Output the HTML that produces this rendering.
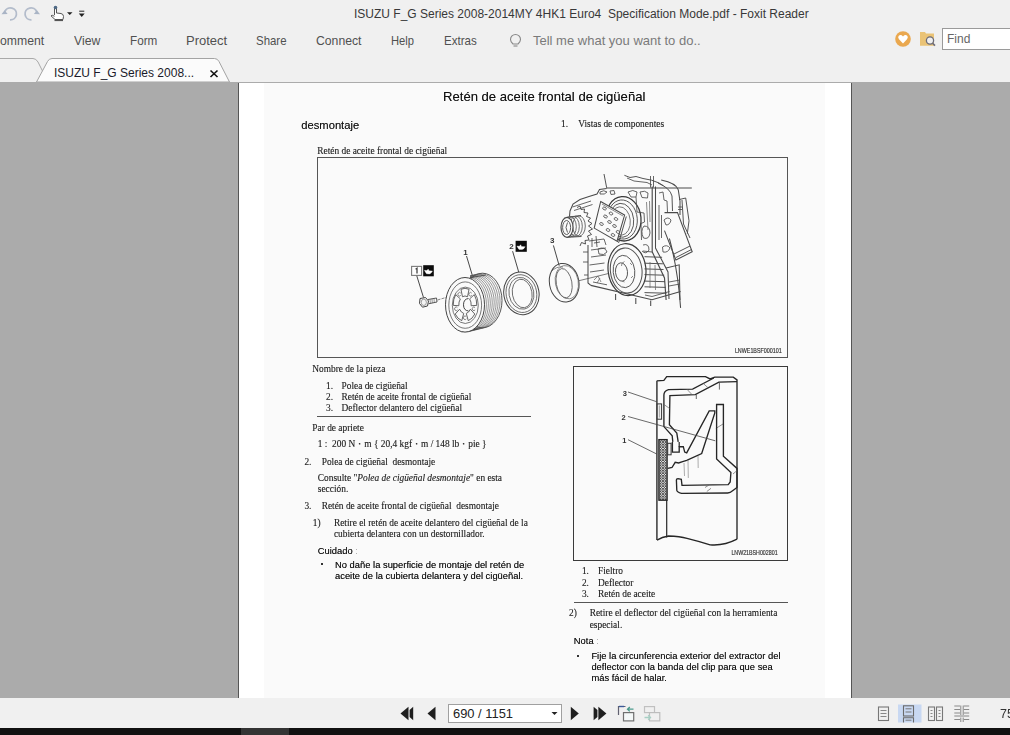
<!DOCTYPE html>
<html><head><meta charset="utf-8">
<style>
*{margin:0;padding:0;box-sizing:border-box}
html,body{width:1010px;height:735px;overflow:hidden;background:#f0f0f0;font-family:"Liberation Sans",sans-serif}
.a{position:absolute;white-space:pre}
#top{position:absolute;left:0;top:0;width:1010px;height:82px;background:#f0f0f0}
#view{position:absolute;left:0;top:82px;width:1010px;height:616px;background:#ababab}
#page{position:absolute;left:238px;top:83px;width:614px;height:615px;background:#fff;border-left:1px solid #555;border-right:1px solid #555;overflow:hidden}
#scan{position:absolute;left:25px;top:0;width:561px;height:615px;background:#fafafa}
#status{position:absolute;left:0;top:698px;width:1010px;height:30px;background:#f0f0f0}
#black{position:absolute;left:0;top:728px;width:1010px;height:7px;background:#111}
.menu{font-size:13px;color:#505050;top:33px}
svg{position:absolute;overflow:visible}
#content{position:absolute;left:0;top:0;width:1010px;height:735px;will-change:transform}
</style></head><body>
<div id="top">
  <div class="a" style="left:354px;top:7px;font-size:12px;color:#383838">ISUZU F_G Series 2008-2014MY 4HK1 Euro4  Specification Mode.pdf - Foxit Reader</div>
  <!-- quick access icons -->
  <svg style="left:0;top:0" width="90" height="28">
    <path d="M4.8 11.8 A6 6 0 1 1 10 19.8" fill="none" stroke="#b3bccb" stroke-width="1.8"/>
    <path d="M1.5 14.3 L4.6 10.2 L7.6 14 Z" fill="#a9b4c5"/>
    <path d="M36.7 11.8 A6 6 0 1 0 31.5 19.8" fill="none" stroke="#b3bccb" stroke-width="1.8"/>
    <path d="M40 14.3 L36.9 10.2 L33.9 14 Z" fill="#a9b4c5"/>
    <path d="M54.5 15 L54.5 8 Q55.5 6.2 56.5 8 L56.5 13 L61 13.5 Q63.5 14 63.5 16.5 L63 19.5 L55 19.5 L51 15.8 Q52 14.6 54.5 16.3" fill="#fff" stroke="#555" stroke-width="1"/>
    <circle cx="55.5" cy="7.5" r="1.8" fill="#4f6a86"/>
    <path d="M54.5 20.5 H63" stroke="#555" stroke-width="1.2"/>
    <path d="M67 12.3 H72.5 L69.75 15 Z" fill="#222"/>
    <path d="M79.2 11.2 H84.3" stroke="#222" stroke-width="1"/>
    <path d="M78.8 13.6 H84.7 L81.75 16.9 Z" fill="#222"/>
  </svg>
  <div class="a menu" style="left:0px;font-size:13px;transform:scaleX(0.94);transform-origin:0 0">omment</div>
  <div class="a menu" style="left:74px;font-size:13px;transform:scaleX(0.94);transform-origin:0 0">View</div>
  <div class="a menu" style="left:130px;font-size:13px;transform:scaleX(0.9);transform-origin:0 0">Form</div>
  <div class="a menu" style="left:186px;font-size:13px;transform:scaleX(1.0);transform-origin:0 0">Protect</div>
  <div class="a menu" style="left:256px;font-size:13px;transform:scaleX(0.88);transform-origin:0 0">Share</div>
  <div class="a menu" style="left:316px;font-size:13px;transform:scaleX(0.94);transform-origin:0 0">Connect</div>
  <div class="a menu" style="left:391px;font-size:13px;transform:scaleX(0.86);transform-origin:0 0">Help</div>
  <div class="a menu" style="left:444px;font-size:13px;transform:scaleX(0.89);transform-origin:0 0">Extras</div>
  <svg style="left:509px;top:33px" width="16" height="16">
    <path d="M4 11 Q1.5 8.5 1.5 6.5 A5 5 0 0 1 11.5 6.5 Q11.5 8.5 9 11 Z" fill="none" stroke="#888" stroke-width="1.1"/>
    <path d="M4.5 13 H8.5" stroke="#888" stroke-width="1.1"/>
  </svg>
  <div class="a menu" style="left:533px;font-size:13px;color:#7a7a7a;top:32.5px">Tell me what you want to do..</div>
  <!-- heart & folder -->
  <svg style="left:890px;top:26px" width="50" height="26">
    <circle cx="13" cy="13" r="7.8" fill="#eaa84f"/>
    <path d="M13 17.5 L9 13.3 Q7.6 11.5 8.6 10 Q10.6 8 13 10.4 Q15.4 8 17.4 10 Q18.4 11.5 17 13.3 Z" fill="#fff"/>
    <path d="M30 6 H35 L36 7.5 H44 V19.8 H30 Z" fill="#eac376"/>
    <circle cx="40" cy="14.5" r="3.6" fill="#f0f0f0" stroke="#6c6c7a" stroke-width="1.3"/>
    <path d="M42.6 17.2 L45 19.6" stroke="#6c6c7a" stroke-width="1.6"/>
  </svg>
  <div style="position:absolute;left:942px;top:28px;width:80px;height:22px;background:#fff;border:1px solid #9a9a9a"></div>
  <div class="a" style="left:947px;top:31.5px;font-size:12px;color:#666">Find</div>
  <!-- tabs -->
  <svg style="left:0;top:0" width="260" height="83">
    <path d="M0 58.5 H33 Q36 58.5 38 62 L44 74" fill="none" stroke="#a9a9a9" stroke-width="1"/>
    <path d="M36.5 82 L47.5 61.5 Q49 58.5 52 58.5 H214.5 Q217.5 58.5 219 61.5 L229.5 82 Z" fill="#fbfbfb" stroke="#a3a3a3" stroke-width="1"/>
    <path d="M210.5 70.5 L217.5 77 M217.5 70.5 L210.5 77" stroke="#111" stroke-width="1.6"/>
  </svg>
  <div class="a" style="left:54px;top:66px;font-size:12px;color:#1a1a2a">ISUZU F_G Series 2008...</div>
</div>
<div id="view"></div>
<div id="page"><div id="scan"></div></div>
<div id="content">
<!--TEXT-->
<div class="a" style="left:443.0px;top:90.31px;font:13.1px/1 'Liberation Sans',sans-serif;color:#111;text-shadow:0 0 0.3px rgba(0,0,0,0.5)">Retén de aceite frontal de cigüeñal</div>
<div class="a" style="left:301.3px;top:119.52px;font:11.2px/1 'Liberation Sans',sans-serif;color:#111;text-shadow:0 0 0.3px rgba(0,0,0,0.5)">desmontaje</div>
<div class="a" style="left:317.8px;top:545.54px;font:9.4px/1 'Liberation Sans',sans-serif;color:#111;text-shadow:0 0 0.4px rgba(0,0,0,0.6)">Cuidado <span style="color:#aaa;text-shadow:none">:</span></div>
<div class="a" style="left:335.0px;top:559.64px;font:9.4px/1 'Liberation Sans',sans-serif;color:#111;text-shadow:0 0 0.4px rgba(0,0,0,0.6)">No dañe la superficie de montaje del retén de</div>
<div class="a" style="left:335.0px;top:570.74px;font:9.4px/1 'Liberation Sans',sans-serif;color:#111;text-shadow:0 0 0.4px rgba(0,0,0,0.6)">aceite de la cubierta delantera y del cigüeñal.</div>
<div class="a" style="left:573.8px;top:636.04px;font:9.4px/1 'Liberation Sans',sans-serif;color:#111;text-shadow:0 0 0.4px rgba(0,0,0,0.6)">Nota <span style="color:#aaa;text-shadow:none">:</span></div>
<div class="a" style="left:591.4px;top:650.84px;font:9.4px/1 'Liberation Sans',sans-serif;color:#111;text-shadow:0 0 0.4px rgba(0,0,0,0.6)">Fije la circunferencia exterior del extractor del</div>
<div class="a" style="left:591.4px;top:661.84px;font:9.4px/1 'Liberation Sans',sans-serif;color:#111;text-shadow:0 0 0.4px rgba(0,0,0,0.6)">deflector con la banda del clip para que sea</div>
<div class="a" style="left:591.4px;top:673.04px;font:9.4px/1 'Liberation Sans',sans-serif;color:#111;text-shadow:0 0 0.4px rgba(0,0,0,0.6)">más fácil de halar.</div>
<div class="a" style="left:561.0px;top:120.13px;font:9.4px/1 'Liberation Serif',serif;color:#202020;-webkit-text-stroke:0.12px #202020">1.</div>
<div class="a" style="left:578.2px;top:120.13px;font:9.4px/1 'Liberation Serif',serif;color:#202020;-webkit-text-stroke:0.12px #202020">Vistas de componentes</div>
<div class="a" style="left:317.3px;top:147.43px;font:9.4px/1 'Liberation Serif',serif;color:#202020;-webkit-text-stroke:0.12px #202020">Retén de aceite frontal de cigüeñal</div>
<div class="a" style="left:312.3px;top:365.13px;font:9.4px/1 'Liberation Serif',serif;color:#202020;-webkit-text-stroke:0.12px #202020">Nombre de la pieza</div>
<div class="a" style="left:326.0px;top:381.53px;font:9.4px/1 'Liberation Serif',serif;color:#202020;-webkit-text-stroke:0.12px #202020">1.</div>
<div class="a" style="left:341.5px;top:381.53px;font:9.4px/1 'Liberation Serif',serif;color:#202020;-webkit-text-stroke:0.12px #202020">Polea de cigüeñal</div>
<div class="a" style="left:326.0px;top:392.73px;font:9.4px/1 'Liberation Serif',serif;color:#202020;-webkit-text-stroke:0.12px #202020">2.</div>
<div class="a" style="left:341.5px;top:392.73px;font:9.4px/1 'Liberation Serif',serif;color:#202020;-webkit-text-stroke:0.12px #202020">Retén de aceite frontal de cigüeñal</div>
<div class="a" style="left:326.0px;top:403.83px;font:9.4px/1 'Liberation Serif',serif;color:#202020;-webkit-text-stroke:0.12px #202020">3.</div>
<div class="a" style="left:341.5px;top:403.83px;font:9.4px/1 'Liberation Serif',serif;color:#202020;-webkit-text-stroke:0.12px #202020">Deflector delantero del cigüeñal</div>
<div class="a" style="left:312.3px;top:423.63px;font:9.4px/1 'Liberation Serif',serif;color:#202020;-webkit-text-stroke:0.12px #202020">Par de apriete</div>
<div class="a" style="left:317.8px;top:440.13px;font:9.4px/1 'Liberation Serif',serif;color:#202020;-webkit-text-stroke:0.12px #202020">1 :  200 N・m { 20,4 kgf・m / 148 lb・pie }</div>
<div class="a" style="left:304.4px;top:457.53px;font:9.4px/1 'Liberation Serif',serif;color:#202020;-webkit-text-stroke:0.12px #202020">2.</div>
<div class="a" style="left:321.7px;top:457.53px;font:9.4px/1 'Liberation Serif',serif;color:#202020;-webkit-text-stroke:0.12px #202020">Polea de cigüeñal  desmontaje</div>
<div class="a" style="left:317.8px;top:474.13px;font:9.4px/1 'Liberation Serif',serif;color:#202020;-webkit-text-stroke:0.12px #202020">Consulte "<i>Polea de cigüeñal desmontaje</i>" en esta</div>
<div class="a" style="left:317.8px;top:484.73px;font:9.4px/1 'Liberation Serif',serif;color:#202020;-webkit-text-stroke:0.12px #202020">sección.</div>
<div class="a" style="left:304.4px;top:502.03px;font:9.4px/1 'Liberation Serif',serif;color:#202020;-webkit-text-stroke:0.12px #202020">3.</div>
<div class="a" style="left:321.7px;top:502.03px;font:9.4px/1 'Liberation Serif',serif;color:#202020;-webkit-text-stroke:0.12px #202020">Retén de aceite frontal de cigüeñal  desmontaje</div>
<div class="a" style="left:312.8px;top:518.63px;font:9.4px/1 'Liberation Serif',serif;color:#202020;-webkit-text-stroke:0.12px #202020">1)</div>
<div class="a" style="left:333.9px;top:518.63px;font:9.4px/1 'Liberation Serif',serif;color:#202020;-webkit-text-stroke:0.12px #202020">Retire el retén de aceite delantero del cigüeñal de la</div>
<div class="a" style="left:333.9px;top:529.73px;font:9.4px/1 'Liberation Serif',serif;color:#202020;-webkit-text-stroke:0.12px #202020">cubierta delantera con un destornillador.</div>
<div class="a" style="left:581.9px;top:567.13px;font:9.4px/1 'Liberation Serif',serif;color:#202020;-webkit-text-stroke:0.12px #202020">1.</div>
<div class="a" style="left:598.0px;top:567.13px;font:9.4px/1 'Liberation Serif',serif;color:#202020;-webkit-text-stroke:0.12px #202020">Fieltro</div>
<div class="a" style="left:581.9px;top:578.53px;font:9.4px/1 'Liberation Serif',serif;color:#202020;-webkit-text-stroke:0.12px #202020">2.</div>
<div class="a" style="left:598.0px;top:578.53px;font:9.4px/1 'Liberation Serif',serif;color:#202020;-webkit-text-stroke:0.12px #202020">Deflector</div>
<div class="a" style="left:581.9px;top:589.73px;font:9.4px/1 'Liberation Serif',serif;color:#202020;-webkit-text-stroke:0.12px #202020">3.</div>
<div class="a" style="left:598.0px;top:589.73px;font:9.4px/1 'Liberation Serif',serif;color:#202020;-webkit-text-stroke:0.12px #202020">Retén de aceite</div>
<div class="a" style="left:569.0px;top:609.43px;font:9.4px/1 'Liberation Serif',serif;color:#202020;-webkit-text-stroke:0.12px #202020">2)</div>
<div class="a" style="left:589.7px;top:609.43px;font:9.4px/1 'Liberation Serif',serif;color:#202020;-webkit-text-stroke:0.12px #202020">Retire el deflector del cigüeñal con la herramienta</div>
<div class="a" style="left:589.7px;top:620.63px;font:9.4px/1 'Liberation Serif',serif;color:#202020;-webkit-text-stroke:0.12px #202020">especial.</div>
<div style="position:absolute;left:317px;top:415.5px;width:214px;height:1.6px;background:#555"></div>
<div style="position:absolute;left:573.5px;top:601.7px;width:214px;height:1.6px;background:#555"></div>
<div style="position:absolute;left:321.2px;top:562.8px;width:2.3px;height:2.3px;background:#333"></div>
<div style="position:absolute;left:577.2px;top:654.6px;width:2.1px;height:2.1px;background:#333"></div>
<div style="position:absolute;left:317px;top:157px;width:471px;height:201px;border:1.1px solid #555"></div>
<div style="position:absolute;left:573px;top:366px;width:215px;height:195px;border:1.2px solid #3a3a3a"></div>
<!--/TEXT-->
<!--SVG-->
<svg style="left:0;top:0;filter:blur(0.3px)" width="1010" height="735" viewBox="0 0 1010 735"><defs><clipPath id="pulclip"><path d="M469 270 L505 265 L505 340 L460 340 L475 304 Z"/></clipPath><pattern id="hatch" width="2.6" height="2.6" patternUnits="userSpaceOnUse"><rect width="2.6" height="2.6" fill="#e6e6e6"/><path d="M0 0 L2.6 2.6 M2.6 0 L0 2.6" stroke="#333" stroke-width="0.75"/></pattern></defs>
<rect x="411.6" y="266.4" width="10" height="9" fill="#fff" stroke="#7a7a7a" stroke-width="1.1"/>
<path d="M415.6 269.2 L417 268.2 L417 273.6" fill="none" stroke="#444" stroke-width="1.3" />
<rect x="423.2" y="265.2" width="10.6" height="11.1" fill="#0c0c0c"/>
<path d="M424.4 270.3 L426.8 270.6 L428.2 269 L429 270.7 L432.5 271 Q431 274 429.5 274 L426.5 273.8 Q425.5 272.5 424.4 270.3 Z" fill="#fff" stroke="#fff" stroke-width="0.3" />
<path d="M416.8 275.9 L423.5 297.5" fill="none" stroke="#333" stroke-width="0.9" />
<path d="M420 298.5 L425.5 297.5 L428.5 301 L427.5 306 L422.5 307.2 L419.5 303.5 Z" fill="#f4f4f4" stroke="#444" stroke-width="1.0" />
<ellipse cx="423.8" cy="302.3" rx="2.6" ry="3.2" transform="rotate(0 423.8 302.3)" fill="none" stroke="#666" stroke-width="0.6"/>
<path d="M428 299.5 L436.5 298 L437 302 L428.5 303.8" fill="none" stroke="#444" stroke-width="0.9" />
<path d="M430 299.1 L430.4 303.4 M432 298.8 L432.3 303 M434 298.4 L434.3 302.7" fill="none" stroke="#555" stroke-width="0.6" />
<path d="M437.5 300 L456 294.5" fill="none" stroke="#555" stroke-width="0.7" stroke-dasharray="3 1.2"/>
<text x="463.2" y="254.6" font-family="Liberation Sans" font-size="8" fill="#333" fill="#222" font-weight="bold">1</text>
<path d="M466.5 256 L472.5 276" fill="none" stroke="#333" stroke-width="0.9" />
<ellipse cx="466.94" cy="304.32" rx="19.5" ry="27.3" transform="rotate(0 466.94 304.32)" fill="none" stroke="#555" stroke-width="0.6" clip-path="url(#pulclip)"/>
<ellipse cx="468.89" cy="303.84" rx="19.5" ry="27.3" transform="rotate(0 468.89 303.84)" fill="none" stroke="#555" stroke-width="0.6" clip-path="url(#pulclip)"/>
<ellipse cx="470.83" cy="303.37" rx="19.5" ry="27.3" transform="rotate(0 470.83 303.37)" fill="none" stroke="#555" stroke-width="0.6" clip-path="url(#pulclip)"/>
<ellipse cx="472.78" cy="302.89" rx="19.5" ry="27.3" transform="rotate(0 472.78 302.89)" fill="none" stroke="#555" stroke-width="0.6" clip-path="url(#pulclip)"/>
<ellipse cx="474.72" cy="302.41" rx="19.5" ry="27.3" transform="rotate(0 474.72 302.41)" fill="none" stroke="#555" stroke-width="0.6" clip-path="url(#pulclip)"/>
<ellipse cx="476.67" cy="301.93" rx="19.5" ry="27.3" transform="rotate(0 476.67 301.93)" fill="none" stroke="#555" stroke-width="0.6" clip-path="url(#pulclip)"/>
<ellipse cx="478.61" cy="301.46" rx="19.5" ry="27.3" transform="rotate(0 478.61 301.46)" fill="none" stroke="#555" stroke-width="0.6" clip-path="url(#pulclip)"/>
<ellipse cx="480.56" cy="300.98" rx="19.5" ry="27.3" transform="rotate(0 480.56 300.98)" fill="none" stroke="#555" stroke-width="0.6" clip-path="url(#pulclip)"/>
<ellipse cx="482.50" cy="300.50" rx="19.5" ry="27.3" transform="rotate(0 482.50 300.50)" fill="none" stroke="#555" stroke-width="1.0" clip-path="url(#pulclip)"/>
<path d="M469.8 277.7 L485.8 275 M461.5 331.8 L477.5 329" fill="none" stroke="#444" stroke-width="0.9" />
<ellipse cx="465.0" cy="304.8" rx="19.5" ry="27.3" transform="rotate(0 465.0 304.8)" fill="#fafafa" stroke="#444" stroke-width="1.0"/>
<ellipse cx="465.2" cy="305.1" rx="16.4" ry="23.2" transform="rotate(0 465.2 305.1)" fill="none" stroke="#555" stroke-width="0.8"/>
<ellipse cx="465.3" cy="305.3" rx="13.0" ry="18.2" transform="rotate(0 465.3 305.3)" fill="none" stroke="#555" stroke-width="0.8"/>
<path d="M463.71 313.41 L461.75 320.66 A11.8 16.5 0 0 1 455.22 314.03 L459.63 309.20 A6.2 8.8 0 0 0 463.71 313.41 Z" fill="none" stroke="#555" stroke-width="0.9" />
<path d="M457.36 307.62 A1.6 1.8 0 1 0 457.46 309.82" fill="none" stroke="#555" stroke-width="0.7"/>
<path d="M458.83 305.72 L453.21 305.38 A11.8 16.5 0 0 1 455.70 294.64 L460.39 298.91 A6.2 8.8 0 0 0 458.83 305.72 Z" fill="none" stroke="#555" stroke-width="0.9" />
<path d="M460.73 293.08 A1.6 1.8 0 1 0 460.83 295.28" fill="none" stroke="#555" stroke-width="0.7"/>
<path d="M462.48 296.76 L460.96 289.30 A11.8 16.5 0 0 1 469.04 289.30 L467.52 296.76 A6.2 8.8 0 0 0 462.48 296.76 Z" fill="none" stroke="#555" stroke-width="0.9" />
<path d="M471.67 293.08 A1.6 1.8 0 1 0 471.77 295.28" fill="none" stroke="#555" stroke-width="0.7"/>
<path d="M469.61 298.91 L474.30 294.64 A11.8 16.5 0 0 1 476.79 305.38 L471.17 305.72 A6.2 8.8 0 0 0 469.61 298.91 Z" fill="none" stroke="#555" stroke-width="0.9" />
<path d="M475.04 307.62 A1.6 1.8 0 1 0 475.14 309.82" fill="none" stroke="#555" stroke-width="0.7"/>
<path d="M470.37 309.20 L474.78 314.03 A11.8 16.5 0 0 1 468.25 320.66 L466.29 313.41 A6.2 8.8 0 0 0 470.37 309.20 Z" fill="none" stroke="#555" stroke-width="0.9" />
<path d="M466.20 316.60 A1.6 1.8 0 1 0 466.30 318.80" fill="none" stroke="#555" stroke-width="0.7"/>
<path d="M468.5 298.5 Q463.5 299 463.5 304.8 Q463.5 310.5 468.5 311" fill="none" stroke="#444" stroke-width="1.0" />
<text x="509.3" y="249.2" font-family="Liberation Sans" font-size="8" fill="#333" fill="#222" font-weight="bold">2</text>
<rect x="515.6" y="240.8" width="11.2" height="11" fill="#0c0c0c"/>
<path d="M516.9 246 L519.3 246.3 L520.7 244.7 L521.5 246.4 L525.2 246.7 Q523.6 249.6 522 249.6 L519 249.4 Q518 248.2 516.9 246 Z" fill="#fff" stroke="#fff" stroke-width="0.3" />
<path d="M512.6 251.2 L518.7 272" fill="none" stroke="#333" stroke-width="0.9" />
<ellipse cx="521.4" cy="293.4" rx="17.6" ry="21.4" transform="rotate(-10 521.4 293.4)" fill="none" stroke="#444" stroke-width="1.0"/>
<ellipse cx="521.4" cy="293.6" rx="15.3" ry="19.0" transform="rotate(-10 521.4 293.6)" fill="none" stroke="#555" stroke-width="0.8"/>
<ellipse cx="521.4" cy="293.3" rx="12.4" ry="16.0" transform="rotate(-10 521.4 293.3)" fill="none" stroke="#555" stroke-width="0.8"/>
<ellipse cx="522.2" cy="293.5" rx="9.8" ry="14.4" transform="rotate(-10 522.2 293.5)" fill="none" stroke="#555" stroke-width="0.8"/>
<text x="550.0" y="242.9" font-family="Liberation Sans" font-size="8" fill="#333" fill="#222" font-weight="bold">3</text>
<path d="M553.4 245.4 L559.2 265.7" fill="none" stroke="#333" stroke-width="0.9" />
<ellipse cx="564.2" cy="282.7" rx="14.75" ry="19.4" transform="rotate(-10 564.2 282.7)" fill="none" stroke="#444" stroke-width="1.0"/>
<ellipse cx="564.1" cy="283.2" rx="7.8" ry="14.8" transform="rotate(-10 564.1 283.2)" fill="none" stroke="#555" stroke-width="0.8"/>
<ellipse cx="566.8" cy="282.2" rx="11.5" ry="16.8" transform="rotate(-10 566.8 282.2)" fill="none" stroke="#666" stroke-width="0.7"/>
<path d="M551 272 Q556 266 563 267" fill="none" stroke="#555" stroke-width="0.7" />
<path d="M579 280.7 L620.4 270.6" fill="none" stroke="#444" stroke-width="0.7" />
<path d="M606.7 187.9 L691.8 187.9" fill="none" stroke="#4a4a4a" stroke-width="1.05" />
<path d="M604 174 L606.7 187.9" fill="none" stroke="#4a4a4a" stroke-width="0.95" />
<path d="M624.4 175.3 L630 177.5 L636 176.5 L643 178.5 L651.6 180.2 L659 183 L663.5 186" fill="none" stroke="#4a4a4a" stroke-width="0.95" />
<path d="M627 178 L634 181 L647 182.5 L652 185" fill="none" stroke="#4a4a4a" stroke-width="0.85" />
<path d="M650.5 176 L650.5 187.5 M653.5 176 L653.5 187.5" fill="none" stroke="#4a4a4a" stroke-width="0.85" />
<path d="M661.2 180 Q676 183 678.3 189.8 L680 201.2 L680 215" fill="none" stroke="#4a4a4a" stroke-width="1.05" />
<path d="M658 183 Q670 188 672 196 L672.5 211" fill="none" stroke="#4a4a4a" stroke-width="0.95" />
<path d="M606.7 188.4 L599.5 189.5 L597 194 L589 196.5 L580 199.5 L573 204 L570 211 L569.5 216.5" fill="none" stroke="#4a4a4a" stroke-width="1.05" />
<path d="M572.5 207 L591 201 M574 210.5 L592.5 204.5" fill="none" stroke="#4a4a4a" stroke-width="0.85" />
<path d="M600 192 Q604 189.5 607 192 Q605 195 600 194 Z M610 191 L614 190.5 L615 194 L611 194.5 Z" fill="none" stroke="#4a4a4a" stroke-width="0.85" />
<path d="M577 207.5 L580 206 L581 209.5 L584.5 209 L584 212.5 L588 213 L586.5 216.5 L590.5 218 L588 221 L592 223.5 L588.5 226 L592.5 229 L588.5 231 L591.5 234.5 L587.5 236 L589 240 L585 240.5 L585.5 244 L581.5 242.5 L580 246" fill="none" stroke="#4a4a4a" stroke-width="0.95" />
<path d="M567 217.3 L581 215.5 M567 237.3 L581.5 236.5" fill="none" stroke="#4a4a4a" stroke-width="0.95" />
<ellipse cx="579" cy="226.04" rx="6.3" ry="10.2" transform="rotate(0 579 226.04)" fill="none" stroke="#555" stroke-width="0.85"/>
<ellipse cx="576" cy="226.28" rx="6.3" ry="10.2" transform="rotate(0 576 226.28)" fill="none" stroke="#555" stroke-width="0.85"/>
<ellipse cx="573" cy="226.52" rx="6.3" ry="10.2" transform="rotate(0 573 226.52)" fill="none" stroke="#555" stroke-width="0.85"/>
<ellipse cx="570" cy="226.76" rx="6.3" ry="10.2" transform="rotate(0 570 226.76)" fill="none" stroke="#555" stroke-width="0.85"/>
<ellipse cx="567" cy="227.3" rx="6.0" ry="10.0" transform="rotate(0 567 227.3)" fill="#fafafa" stroke="#4a4a4a" stroke-width="1.15"/>
<ellipse cx="566.6" cy="227.5" rx="4.0" ry="7.0" transform="rotate(0 566.6 227.5)" fill="none" stroke="#555" stroke-width="0.95"/>
<path d="M567.5 222.5 Q564.5 227.5 567.5 232.5" fill="none" stroke="#555" stroke-width="0.95" />
<ellipse cx="623.5" cy="218.8" rx="17.5" ry="22.2" transform="rotate(-5 623.5 218.8)" fill="#fafafa" stroke="#3a3a3a" stroke-width="1.3"/>
<ellipse cx="622.5" cy="219.5" rx="14.8" ry="19.6" transform="rotate(-5 622.5 219.5)" fill="none" stroke="#555" stroke-width="0.95"/>
<ellipse cx="621.5" cy="220.3" rx="12.2" ry="17.0" transform="rotate(-5 621.5 220.3)" fill="none" stroke="#555" stroke-width="0.95"/>
<ellipse cx="620.5" cy="221.0" rx="9.8" ry="14.2" transform="rotate(-5 620.5 221.0)" fill="none" stroke="#666" stroke-width="0.85"/>
<path d="M600.7 201.5 L624.6 215.1 L617 241.2 L594.2 228.1 Z" fill="#fafafa" stroke="#4a4a4a" stroke-width="1.05" />
<path d="M626.3 216.5 L618.8 242.5 L617 241.2" fill="none" stroke="#4a4a4a" stroke-width="0.95" />
<path d="M602 204 L623 216" fill="none" stroke="#666" stroke-width="0.75" />
<ellipse cx="604.5" cy="208.5" rx="1.9" ry="1.3" transform="rotate(25 604.5 208.5)" fill="none" stroke="#555" stroke-width="0.85"/>
<ellipse cx="611" cy="213.5" rx="1.9" ry="1.3" transform="rotate(25 611 213.5)" fill="none" stroke="#555" stroke-width="0.85"/>
<ellipse cx="605.5" cy="216.5" rx="1.9" ry="1.3" transform="rotate(25 605.5 216.5)" fill="none" stroke="#555" stroke-width="0.85"/>
<ellipse cx="616" cy="219" rx="1.9" ry="1.3" transform="rotate(25 616 219)" fill="none" stroke="#555" stroke-width="0.85"/>
<ellipse cx="609.5" cy="222" rx="1.9" ry="1.3" transform="rotate(25 609.5 222)" fill="none" stroke="#555" stroke-width="0.85"/>
<ellipse cx="614.5" cy="226" rx="1.9" ry="1.3" transform="rotate(25 614.5 226)" fill="none" stroke="#555" stroke-width="0.85"/>
<ellipse cx="608" cy="230" rx="1.9" ry="1.3" transform="rotate(25 608 230)" fill="none" stroke="#555" stroke-width="0.85"/>
<ellipse cx="613" cy="235" rx="1.9" ry="1.3" transform="rotate(25 613 235)" fill="none" stroke="#555" stroke-width="0.85"/>
<ellipse cx="601.5" cy="224" rx="1.9" ry="1.3" transform="rotate(25 601.5 224)" fill="none" stroke="#555" stroke-width="0.85"/>
<ellipse cx="618" cy="232" rx="1.9" ry="1.3" transform="rotate(25 618 232)" fill="none" stroke="#555" stroke-width="0.85"/>
<path d="M628 192 Q633 189 637 192 L636 197 L631 197 Z" fill="none" stroke="#4a4a4a" stroke-width="0.85" />
<path d="M640 192 Q645 190 648 193 L647.5 198 L642 197.5 Z" fill="none" stroke="#4a4a4a" stroke-width="0.85" />
<path d="M636 197 L637 212 L644 213 L644.5 222 L641 223.5 L641.5 240" fill="none" stroke="#4a4a4a" stroke-width="0.85" />
<path d="M644 226 Q650 226 650 233 Q649 240 643.5 238 Q640 231 644 226" fill="none" stroke="#4a4a4a" stroke-width="0.85" />
<path d="M643 245 Q649 243 649 250 Q646 255 642 251" fill="none" stroke="#4a4a4a" stroke-width="0.85" />
<path d="M646.5 202 L648 230 M649.5 201 L650 222" fill="none" stroke="#666" stroke-width="0.75" />
<path d="M652.2 186.5 L652.2 251.8 L664.5 277.9 L666.1 300" fill="none" stroke="#4a4a4a" stroke-width="1.15" />
<path d="M655.5 186.5 L655.5 248 L668 272 L669 299" fill="none" stroke="#4a4a4a" stroke-width="1.05" />
<path d="M659 193 L663 192 L664 200 L667 201 L667.5 212 M659 205 L659 240 M661.5 215 L661.5 238" fill="none" stroke="#4a4a4a" stroke-width="0.85" />
<path d="M664.5 212.6 L677.5 212.6 L692.2 251.8 L675.9 259.9 L664.5 230.6" fill="none" stroke="#4a4a4a" stroke-width="1.05" />
<path d="M674 254 L690 246 M676 257.5 L691.5 249.5" fill="none" stroke="#4a4a4a" stroke-width="0.95" />
<path d="M679 199.6 L685.7 198 L689 220.8 L687.3 233.8 M682 200 L683.5 224 L690 238" fill="none" stroke="#4a4a4a" stroke-width="0.95" />
<path d="M678 207 L682 207 M678 209.5 L682 209.5" fill="none" stroke="#4a4a4a" stroke-width="0.85" />
<path d="M664 220 Q668 216 671 220 Q670 225 666 225 Z" fill="none" stroke="#4a4a4a" stroke-width="0.85" />
<path d="M662.5 247 Q667 244 670 248 Q668 253 663 252 Z" fill="none" stroke="#4a4a4a" stroke-width="0.85" />
<path d="M666.1 268.1 L679.2 264.8 L680 300" fill="none" stroke="#4a4a4a" stroke-width="1.05" />
<path d="M669 282 L680 280 M669 286 L680 284" fill="none" stroke="#4a4a4a" stroke-width="0.85" />
<ellipse cx="627.0" cy="269.6" rx="18.9" ry="26.0" transform="rotate(-6 627.0 269.6)" fill="#fafafa" stroke="#3a3a3a" stroke-width="1.2"/>
<ellipse cx="626.2" cy="270.5" rx="15.8" ry="22.5" transform="rotate(-6 626.2 270.5)" fill="none" stroke="#555" stroke-width="1.05"/>
<ellipse cx="624.0" cy="271.5" rx="10.8" ry="16.2" transform="rotate(-6 624.0 271.5)" fill="none" stroke="#555" stroke-width="0.95"/>
<ellipse cx="621.5" cy="272.0" rx="6.0" ry="9.2" transform="rotate(-6 621.5 272.0)" fill="none" stroke="#555" stroke-width="0.95"/>
<path d="M624.5 261.5 Q621 263 621.5 266 M630 263 L632 265 M631 278 L633 276 M622 281 L624.5 282" fill="none" stroke="#666" stroke-width="0.75" />
<path d="M588 245 L588 283 L590.8 285.4" fill="none" stroke="#4a4a4a" stroke-width="1.05" />
<path d="M591 250 L606 248 M591 257 L606 255 M589.5 265 L604.5 263 M590 272 L604 270" fill="none" stroke="#4a4a4a" stroke-width="0.85" />
<path d="M583 252 L588 252 M583 262 L588 262 M584 275 L588 275" fill="none" stroke="#4a4a4a" stroke-width="0.85" />
<path d="M592 238 L592 247 M596 236 L597 247 M594 243 L600 242" fill="none" stroke="#4a4a4a" stroke-width="0.85" />
<path d="M598 249 Q605 246 607 252 Q604 256 599 254 Z" fill="none" stroke="#4a4a4a" stroke-width="0.85" />
<path d="M589 241 L604 239 L606 245" fill="none" stroke="#4a4a4a" stroke-width="0.85" />
<path d="M594 280 L598 276 L601 282 M597 283 L600 278" fill="none" stroke="#666" stroke-width="0.75" />
<path d="M644.5 256.7 L662.1 257.3" fill="none" stroke="#4a4a4a" stroke-width="0.95" />
<path d="M644.5 263.2 L662.9 263.8" fill="none" stroke="#4a4a4a" stroke-width="0.95" />
<path d="M644.5 268.9 L663.5 269.5" fill="none" stroke="#4a4a4a" stroke-width="0.95" />
<path d="M644.5 274.6 L664.2 275.20000000000005" fill="none" stroke="#4a4a4a" stroke-width="0.95" />
<path d="M644.5 281.1 L665.0 281.70000000000005" fill="none" stroke="#4a4a4a" stroke-width="0.95" />
<path d="M644.5 286.8 L665.7 287.40000000000003" fill="none" stroke="#4a4a4a" stroke-width="0.95" />
<path d="M644.5 292.6 L666.4 293.20000000000005" fill="none" stroke="#4a4a4a" stroke-width="0.95" />
<path d="M650 262 L650 288 M655 265 L655.5 290" fill="none" stroke="#666" stroke-width="0.75" />
<path d="M643 251 L652 252" fill="none" stroke="#4a4a4a" stroke-width="0.85" />
<path d="M590.8 285.4 L652 299.7 L680.6 291.5" fill="none" stroke="#4a4a4a" stroke-width="1.15" />
<path d="M593 282 L607 284.8 M645 295 L652 296.5 L669.5 291.5" fill="none" stroke="#4a4a4a" stroke-width="0.85" />
<path d="M615.6 294 L615.6 300 M635.8 298 L635.8 304 M650.7 300.5 L650.7 306" fill="none" stroke="#4a4a4a" stroke-width="1.05" />
<path d="M669.4 238.5 Q678 270 680.6 307.9" fill="none" stroke="#4a4a4a" stroke-width="1.05" />
<path d="M656.9 380.8 L663.9 380.3 L666.7 376.6 L705.5 376.6 L710.1 378.9 L714.8 377.1 L733.3 377.1 L737 379.9 L737 539.2" fill="none" stroke="#262626" stroke-width="1.35" />
<path d="M656.9 380.8 L656.9 540.1" fill="none" stroke="#444" stroke-width="1.6" />
<path d="M657 540.1 Q662 537 668.5 536 Q680 536.5 687 538.3 Q698 541 710.1 544.8 Q724 546 737 539.2" fill="none" stroke="#262626" stroke-width="1.35" />
<path d="M666.7 499.9 L666.7 537.4" fill="none" stroke="#262626" stroke-width="1.2" />
<rect x="658.9" y="439.6" width="8.2" height="60.6" fill="url(#hatch)" stroke="#222" stroke-width="1.3"/>
<rect x="657.2" y="403.9" width="4.4" height="15.3" fill="#f2f2f2" stroke="#333" stroke-width="1"/>
<path d="M659.4 405.5 L659.4 417.5" fill="none" stroke="#777" stroke-width="0.6" />
<path d="M713.8 378 L692.6 389.1 L668.5 389.6 Q663.9 391 663.9 395.1 L663.9 426.6 L672.2 435.8 L672.8 441.9" fill="none" stroke="#262626" stroke-width="1.35" />
<path d="M737 381.7 L718.9 382.2 L695.3 394.7 L669.9 395.6 L669.4 424.7 L676.8 433.1 L678.2 441.9" fill="none" stroke="#262626" stroke-width="1.35" />
<path d="M687 389.3 L692 394.6 M703.3 383.5 L708.2 387.9 M664 404.5 L669.6 408.5 M715.8 428.5 L723.3 423.8" fill="none" stroke="#666" stroke-width="0.7" />
<path d="M719.4 382.2 L719.4 389.6 M696.3 394.7 L696.3 399" fill="none" stroke="#444" stroke-width="0.8" />
<rect x="667.7" y="443.3" width="3.4" height="11.5" fill="#f5f5f5" stroke="#333" stroke-width="1"/>
<path d="M672.4 441.9 L672.4 452.1 L679.2 452.1 L679.2 446.7 L683.3 446.7 L684.7 452.1 L686.7 452.8 L709.2 410.9 L714.8 410.9 L714.8 413 L701.7 453.5 L686.7 460.3 L682.6 461.6 L678.6 463 L675.2 462.3 L672 467.5 L667.7 468.4" fill="none" stroke="#262626" stroke-width="1.35" />
<path d="M679.2 446.7 L679.2 441.9" fill="none" stroke="#262626" stroke-width="1.2" />
<path d="M684 463 L684.5 476 M688 460 L688.3 478 M698 456 L698.2 468" fill="none" stroke="#777" stroke-width="0.6" />
<path d="M716.6 404.5 L723.4 404.5 L723.4 456.2 L737 468.4 L737 487.5 L733.3 490.2 Q730 493 727.7 493 L681.5 493.4 Q676.8 492 676.8 490.2 L676.4 480 Q676.4 478.6 678 478.6 L681.3 479.3 L682 485.4 L728.2 484.7 L730.2 482 L730.9 472.5 L716.6 458.9 Z" fill="none" stroke="#262626" stroke-width="1.35" />
<path d="M705 487.5 L709 485 M706.8 491.5 L711 488.3 M733 474 L737 470.5" fill="none" stroke="#666" stroke-width="0.7" />
<path d="M628 392 L656.9 401.8" fill="none" stroke="#444" stroke-width="0.8" />
<path d="M628 416.5 L715.3 440.8" fill="none" stroke="#444" stroke-width="0.8" />
<path d="M628 439.7 L656.9 454.1" fill="none" stroke="#444" stroke-width="0.8" />
<text x="622.8" y="395.5" font-family="Liberation Sans" font-size="7.5" fill="#333" fill="#222" font-weight="bold">3</text>
<text x="621.5" y="419.5" font-family="Liberation Sans" font-size="7.5" fill="#333" fill="#222" font-weight="bold">2</text>
<text x="622.3" y="442.7" font-family="Liberation Sans" font-size="7.5" fill="#333" fill="#222" font-weight="bold">1</text>
<text x="734.9" y="353" font-family="Liberation Sans" font-size="6.8" fill="#333" textLength="46.8" lengthAdjust="spacingAndGlyphs" fill="#222" stroke="#222" stroke-width="0.15">LNWE1BSF000101</text>
<text x="731.4" y="555.2" font-family="Liberation Sans" font-size="6.8" fill="#333" textLength="46.2" lengthAdjust="spacingAndGlyphs" fill="#222" stroke="#222" stroke-width="0.15">LNW21BSH002801</text>
</svg>
<!--/SVG-->
</div>
<div id="status">
  <svg style="left:0;top:0" width="1010" height="30">
    <!-- first page -->
    <path d="M408.5 8.8 L400.5 15.5 L408.5 22.2 Z" fill="#1e1e1e"/>
    <path d="M413.2 8.8 L409.6 12 V19 L413.2 22.2 Z" fill="#1e1e1e"/>
    <path d="M435.5 8.8 L427.5 15.5 L435.5 22.2 Z" fill="#1e1e1e"/>
    <path d="M570.8 8.8 L578.8 15.5 L570.8 22.2 Z" fill="#1e1e1e"/>
    <path d="M593.6 8.8 L597.4 12 V19 L593.6 22.2 Z" fill="#1e1e1e"/>
    <path d="M598.4 8.8 L606.4 15.5 L598.4 22.2 Z" fill="#1e1e1e"/>
    <!-- prev view -->
    <path d="M618.5 17 V8.5 H625.5" fill="none" stroke="#606070" stroke-width="1.2"/>
    <path d="M619 8.5 H624" stroke="#3c5a9a" stroke-width="1.4"/>
    <rect x="623.5" y="14.6" width="10.2" height="8.3" fill="#f4f8f8" stroke="#707070" stroke-width="1.2"/>
    <path d="M633.5 11.2 H627.5 M629.8 9 L627.5 11.2 L629.8 13.4" fill="none" stroke="#4a9a8c" stroke-width="1.3"/>
    <!-- next view (disabled) -->
    <rect x="644.5" y="8.6" width="10" height="6" fill="none" stroke="#c0c0c0" stroke-width="1.2"/>
    <rect x="649.5" y="14.6" width="10.3" height="8.3" fill="#f0f0f0" stroke="#bdbdbd" stroke-width="1.2"/>
    <path d="M644.5 19.5 H650.5 M648.2 17.3 L650.5 19.5 L648.2 21.7" fill="none" stroke="#a8cfc4" stroke-width="1.3"/>
    <!-- view mode icons -->
    <rect x="878.5" y="9" width="10" height="13.5" fill="none" stroke="#777" stroke-width="1.1"/>
    <path d="M880.5 12.5 H886.5 M880.5 15.5 H886.5 M880.5 18.5 H886.5" stroke="#888" stroke-width="1"/>
    <rect x="898" y="6.5" width="23.5" height="18" fill="#c8d8f2"/>
    <rect x="903.5" y="7.8" width="10" height="10.2" fill="none" stroke="#6a6a6a" stroke-width="1.1"/>
    <path d="M903.5 24.5 V19.8 H913.5 V24.5" fill="none" stroke="#6a6a6a" stroke-width="1.1"/>
    <path d="M905.5 10.8 H911.5 M905.5 14 H911.5 M905.5 22.2 H911.5" stroke="#777" stroke-width="1"/>
    <rect x="928.5" y="9" width="6" height="13.5" fill="none" stroke="#777" stroke-width="1.1"/>
    <rect x="936.5" y="9" width="6" height="13.5" fill="none" stroke="#777" stroke-width="1.1"/>
    <path d="M930.5 12.5 H932.5 M930.5 15.5 H932.5 M930.5 18.5 H932.5 M938.5 12.5 H940.5 M938.5 15.5 H940.5 M938.5 18.5 H940.5" stroke="#888" stroke-width="1"/>
    <path d="M960.8 7.5 V17 M960.8 19.5 V24 M963.2 7.5 V17 M963.2 19.5 V24 M954.3 18 H969.2" stroke="#7a7a7a" stroke-width="0.9"/>
    <path d="M954.3 8 H960 M954.3 11.5 H960 M954.3 15 H960 M954.3 21.5 H960 M963.8 8 H969.2 M963.8 11.5 H969.2 M963.8 15 H969.2 M963.8 21.5 H969.2" stroke="#8a8a8a" stroke-width="1"/>
  </svg>
  <div style="position:absolute;left:447.5px;top:5.5px;width:114.5px;height:19.5px;background:#fff;border:1px solid #a0a0a0"></div>
  <div class="a" style="left:453px;top:7.5px;font-size:12.9px;color:#222">690 / 1151</div>
  <svg style="left:0;top:0" width="1010" height="30"><path d="M551.5 14 H557.5 L554.5 17 Z" fill="#222"/></svg>
  <div class="a" style="left:1000px;top:8.5px;font-size:12.5px;color:#333">75</div>
</div>
<div id="black"><div style="position:absolute;left:241px;top:0;width:48px;height:7px;background:#333"></div></div>
</body></html>
